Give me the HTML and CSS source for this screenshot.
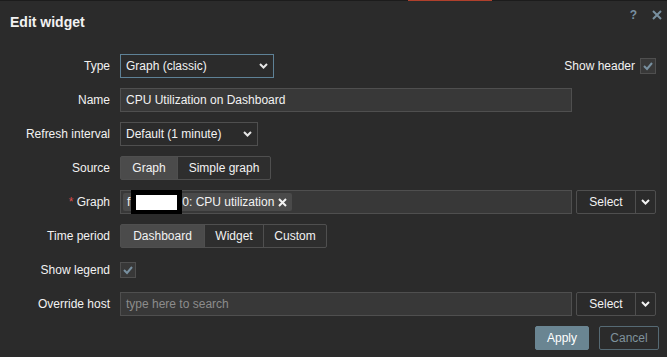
FILE: index.html
```html
<!DOCTYPE html>
<html>
<head>
<meta charset="utf-8">
<link rel="stylesheet" href="styles.css">
</head>
<body>
<div class="strip"><span class="strip-dark"></span><span class="strip-red"></span><span class="strip-dark rest"></span></div>
<div class="dialog">
  <header class="dlg-head">
    <h2 class="title">Edit widget</h2>
    <div class="head-icons">
      <span class="help">?</span>
      <svg class="close" width="10" height="10" viewBox="0 0 10 10"><path d="M1 1 L9 9 M9 1 L1 9" stroke="#7890a0" stroke-width="2" fill="none"/></svg>
    </div>
  </header>

  <div class="form">
    <div class="lbl">Type</div>
    <div class="ctl row-type">
      <div class="select sel-type focused"><span>Graph (classic)</span><svg class="chev" width="9" height="6" viewBox="0 0 9 6"><path d="M1 1 L4.5 4.5 L8 1" stroke="#e6e6e6" stroke-width="2" fill="none"/></svg></div>
      <div class="show-header"><span>Show header</span><span class="check"><svg width="14" height="14" viewBox="0 0 14 14"><path d="M3 7 L6 10 L11 4" stroke="#7890a0" stroke-width="2" fill="none"/></svg></span></div>
    </div>

    <div class="lbl">Name</div>
    <div class="ctl"><div class="input wide">CPU Utilization on Dashboard</div></div>

    <div class="lbl">Refresh interval</div>
    <div class="ctl"><div class="select sel-refresh"><span>Default (1 minute)</span><svg class="chev" width="9" height="6" viewBox="0 0 9 6"><path d="M1 1 L4.5 4.5 L8 1" stroke="#e6e6e6" stroke-width="2" fill="none"/></svg></div></div>

    <div class="lbl">Source</div>
    <div class="ctl"><div class="seg"><span class="seg-item on w56">Graph</span><span class="seg-item w94">Simple graph</span></div></div>

    <div class="lbl"><span class="req">*</span> Graph</div>
    <div class="ctl picker">
      <div class="input wide multi"><span class="tag">f<span class="redact"><span class="redact-in"></span></span>0: CPU utilization <svg class="tag-x" width="9" height="9" viewBox="0 0 9 9"><path d="M1 1 L8 8 M8 1 L1 8" stroke="#f2f2f2" stroke-width="2" fill="none"/></svg></span></div>
      <div class="btn-group"><span class="btn-sel">Select</span><span class="btn-chev"><svg width="9" height="6" viewBox="0 0 9 6"><path d="M1 1 L4.5 4.5 L8 1" stroke="#f2f2f2" stroke-width="2" fill="none"/></svg></span></div>
    </div>

    <div class="lbl">Time period</div>
    <div class="ctl"><div class="seg"><span class="seg-item on w83">Dashboard</span><span class="seg-item w59">Widget</span><span class="seg-item w64">Custom</span></div></div>

    <div class="lbl">Show legend</div>
    <div class="ctl"><span class="check"><svg width="14" height="14" viewBox="0 0 14 14"><path d="M3 7 L6 10 L11 4" stroke="#7890a0" stroke-width="2" fill="none"/></svg></span></div>

    <div class="lbl">Override host</div>
    <div class="ctl picker">
      <div class="input wide placeholder">type here to search</div>
      <div class="btn-group"><span class="btn-sel">Select</span><span class="btn-chev"><svg width="9" height="6" viewBox="0 0 9 6"><path d="M1 1 L4.5 4.5 L8 1" stroke="#f2f2f2" stroke-width="2" fill="none"/></svg></span></div>
    </div>
  </div>

  <footer class="dlg-foot">
    <button class="btn-apply">Apply</button>
    <button class="btn-cancel">Cancel</button>
  </footer>
</div>
</body>
</html>
```
FILE: styles.css
```css
* { box-sizing: border-box; }
html, body { margin: 0; padding: 0; }
body {
  background: #2b2b2b;
  color: #f2f2f2;
  font-family: "Liberation Sans", Arial, sans-serif;
  font-size: 12px;
  width: 667px;
  height: 357px;
  overflow: hidden;
}
.strip { display: flex; height: 1px; }
.strip-dark { width: 408px; background: #1c1c1c; }
.strip-red { width: 84px; background: #b0402c; }
.strip-dark.rest { flex: 1; width: auto; }

.dlg-head {
  display: flex;
  justify-content: space-between;
  height: 53px;
  padding: 0 5px 0 10px;
}
.title {
  margin: 13px 0 0;
  font-size: 14px;
  line-height: 16px;
  font-weight: bold;
  color: #f2f2f2;
}
.head-icons {
  display: flex;
  align-items: center;
  gap: 15px;
  height: 10px;
  margin-top: 9px;
}
.help {
  color: #7890a0;
  font-size: 12px;
  font-weight: bold;
  line-height: 10px;
}
.close { display: block; }

.form {
  display: grid;
  grid-template-columns: 100px 536px;
  grid-auto-rows: 24px;
  column-gap: 10px;
  row-gap: 10px;
  padding-left: 10px;
}
.lbl {
  text-align: right;
  align-self: center;
  line-height: 14px;
  white-space: nowrap;
}
.req { color: #d64e4e; }
.ctl { display: flex; align-items: center; }
.row-type { justify-content: space-between; }

.select {
  height: 24px;
  display: flex;
  align-items: center;
  justify-content: space-between;
  padding: 0 5px 0 5px;
  border: 1px solid #4f4f4f;
  background: #2b2b2b;
}
.select.focused { border-color: #5e8196; }
.sel-type { width: 154px; }
.sel-refresh { width: 138px; }
.chev { display: block; }

.show-header { display: flex; align-items: center; gap: 5px; }
.check {
  width: 16px;
  height: 16px;
  border: 1px solid #4f4f4f;
  background: #383838;
  display: flex;
  align-items: center;
  justify-content: center;
}
.check svg { display: block; }

.input {
  height: 24px;
  border: 1px solid #4f4f4f;
  background: #383838;
  display: flex;
  align-items: center;
  padding: 0 5px;
}
.input.wide { width: 452px; }
.input.placeholder { color: #8c8c8c; }
.input.multi { padding: 0 2px; }

.tag {
  display: flex;
  align-items: center;
  height: 18px;
  background: #4a4a4a;
  padding: 0 5px 0 4px;
  border-radius: 2px;
  white-space: pre;
}
.redact {
  width: 51px;
  height: 24px;
  background: #000;
  margin: 0 0 0 1px;
  display: flex;
  align-items: center;
  justify-content: center;
}
.redact-in { width: 41px; height: 15px; background: #fff; }
.tag-x { display: block; }

.picker { gap: 4px; }
.btn-group {
  display: flex;
  height: 24px;
  border: 1px solid #4f4f4f;
  border-radius: 2px;
  background: #2b2b2b;
}
.btn-sel {
  width: 59px;
  display: flex;
  align-items: center;
  justify-content: center;
  border-right: 1px solid #4f4f4f;
}
.btn-chev {
  width: 19px;
  display: flex;
  align-items: center;
  justify-content: center;
}

.seg {
  display: flex;
  height: 24px;
  border: 1px solid #4f4f4f;
  border-radius: 2px;
  background: #2e2e2e;
}
.seg-item {
  display: flex;
  align-items: center;
  justify-content: center;
  border-left: 1px solid #4f4f4f;
}
.seg-item:first-child { border-left: none; }
.seg-item.on { background: #4b4b4b; }
.w56 { width: 56px; }
.w94 { width: 93px; }
.w83 { width: 83px; }
.w59 { width: 59px; }
.w64 { width: 63px; }

.dlg-foot {
  display: flex;
  justify-content: flex-end;
  gap: 10px;
  padding-right: 8px;
  margin-top: 10px;
}
.dlg-foot button {
  font-family: "Liberation Sans", Arial, sans-serif;
  font-size: 12px;
  height: 24px;
  border-radius: 2px;
  padding: 0;
}
.btn-apply {
  width: 54px;
  background: #6a8592;
  border: 1px solid #6a8592;
  color: #ffffff;
}
.btn-cancel {
  width: 60px;
  background: transparent;
  border: 1px solid #566a74;
  color: #7f929c;
}
```
